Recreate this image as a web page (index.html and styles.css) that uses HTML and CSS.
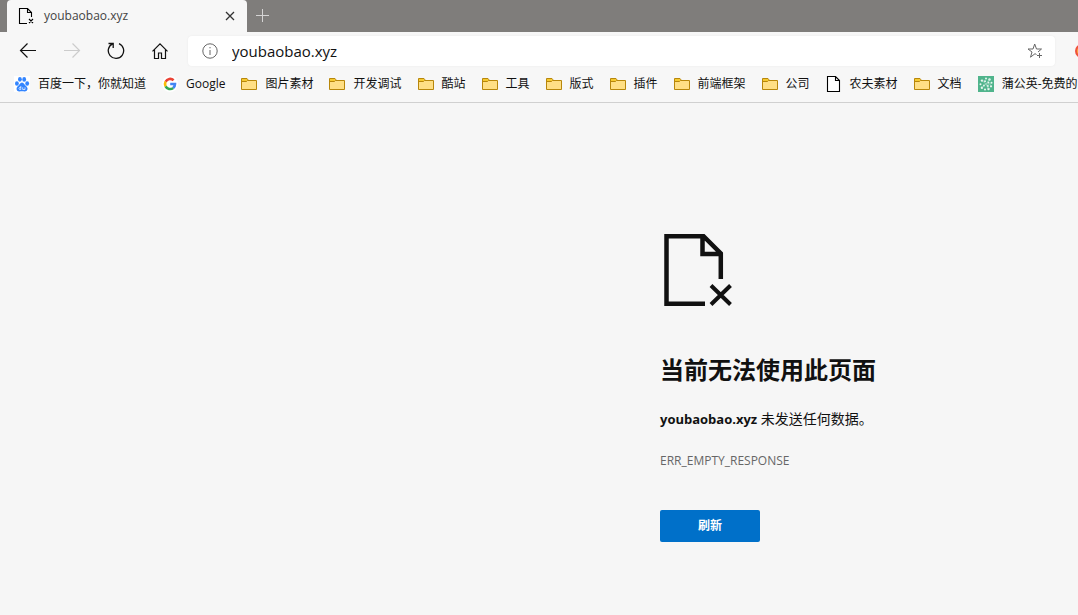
FILE: index.html
```html
<!DOCTYPE html>
<html lang="zh-CN">
<head>
<meta charset="utf-8">
<meta name="viewport" content="width=device-width, initial-scale=1">
<title>youbaobao.xyz</title>
<link rel="stylesheet" href="styles.css">
</head>
<body>
<svg class="sprite" aria-hidden="true">
  <symbol id="folder" viewBox="0 0 16 16">
    <path d="M.5 13.500V2.500H6L7.500 4.500H15.500V13.500Z" fill="#ffdf85" stroke="#b8870b"/>
    <path d="M1 3H5.600L6.600 4.500L5.500 5.500H1Z" fill="#f5c92f"/>
    <path d="M.5 5.500H5.500L6.500 4.500H8" fill="none" stroke="#b8870b"/>
  </symbol>
</svg>
<header class="browser">
  <div class="tabs">
    <div class="tab">
      <svg class="tab-icon" viewBox="0 0 16 16" fill="none" stroke="#000" stroke-width="1.100"><path d="M9 15.500H1.500V.5H9.500L13.500 4.500V9M9.500 .5V4.500H13.500M11 11L15 15M15 11L11 15"/></svg>
      <span class="tab-title">youbaobao.xyz</span>
      <button class="tab-close" type="button" aria-label="关闭标签页"><svg viewBox="0 0 10 10" fill="none" stroke="#333" stroke-width="1.300"><path d="M1 1L9 9M9 1L1 9"/></svg></button>
    </div>
    <button class="tab-new" type="button" aria-label="新建标签页"><svg viewBox="0 0 14 14" fill="none" stroke="#d5d4d4"><path d="M6.500 0V13M0 6.500H13"/></svg></button>
  </div>
  <div class="toolbar">
    <button class="tool" type="button" aria-label="后退"><svg viewBox="0 0 18 18" fill="none" stroke="#111" stroke-width="1.200"><path d="M17 8.500H1.500M8.500 1.500L1.500 8.500L8.500 15.500"/></svg></button>
    <button class="tool" type="button" aria-label="前进" disabled><svg viewBox="0 0 18 18" fill="none" stroke="#ccc" stroke-width="1.200"><path d="M1 8.500H16.500M9.500 1.500L16.500 8.500L9.500 15.500"/></svg></button>
    <button class="tool" type="button" aria-label="刷新"><svg viewBox="0 0 18 18" fill="none" stroke="#111" stroke-width="1.300"><path d="M12 1.600A7.700 7.700 0 1 1 5.500 1.800M1.500 1.500H6.200V6"/></svg></button>
    <button class="tool" type="button" aria-label="主页"><svg viewBox="0 0 18 18" fill="none" stroke="#111" stroke-width="1.200"><path d="M1.500 9.300L9 1.800L16.500 9.300M3.500 7.500V16.500H7.500V11H10.500V16.500H14.500V7.500"/></svg></button>
    <div class="address">
      <svg class="info" viewBox="0 0 16 16" fill="none" stroke="#666"><circle cx="8" cy="8" r="7.200"/><path d="M8 7V12M8 4V5.300"/></svg>
      <input class="url" type="text" value="youbaobao.xyz" aria-label="地址">
      <button class="star" type="button" aria-label="收藏"><svg viewBox="0 0 16 16" fill="none" stroke="#666"><path d="M9.500 11.500L8 10.700L3.500 14.200L5 9L1 6H6L7.700 1L9.500 6H14.500L11 9M12.500 10V15M10 12.500H15"/></svg></button>
    </div>
    <span class="profile"></span>
  </div>
  <nav class="bookmarks" aria-label="收藏夹">
    <a class="bookmark" href="#"><svg viewBox="0 0 16 16"><rect width="16" height="16" fill="#fff"/><g fill="#3385ff"><ellipse cx="2.900" cy="7.500" rx="1.900" ry="2.300"/><ellipse cx="5.900" cy="3.300" rx="1.900" ry="2.400"/><ellipse cx="10.200" cy="3.400" rx="1.900" ry="2.400"/><ellipse cx="13.200" cy="7.500" rx="1.900" ry="2.300"/><path d="M8 6.500C10 6.500 10.400 9 12.500 10.500C14.800 13 12.900 15.700 10.500 15.400C8.500 15.100 7.500 15.100 5.500 15.400C3 15.700 1.500 13 3.500 10.600C5.600 9 6 6.500 8 6.500Z"/></g><path d="M6.800 10V13.500H5.500Q4.500 12.500 5.500 11.500H6.800M8.700 11.300V13.500H11V11.300" fill="none" stroke="#fff" stroke-width=".7"/></svg>百度一下，你就知道</a>
    <a class="bookmark" href="#"><svg viewBox="0 0 16 16" fill="none" stroke-width="2.600"><circle cx="8" cy="8" r="8" fill="#fff"/><path d="M11.600 4.300A5 5 0 0 0 3.600 5.700" stroke="#ea4335"/><path d="M3.600 5.700A5 5 0 0 0 3.600 10.300" stroke="#fbbc05"/><path d="M3.600 10.300A5 5 0 0 0 11.200 11.900" stroke="#34a853"/><path d="M11.200 11.900A5 5 0 0 0 13 8H8.200" stroke="#4285f4"/></svg>Google</a>
    <a class="bookmark" href="#"><svg><use href="#folder"/></svg>图片素材</a>
    <a class="bookmark" href="#"><svg><use href="#folder"/></svg>开发调试</a>
    <a class="bookmark" href="#"><svg><use href="#folder"/></svg>酷站</a>
    <a class="bookmark" href="#"><svg><use href="#folder"/></svg>工具</a>
    <a class="bookmark" href="#"><svg><use href="#folder"/></svg>版式</a>
    <a class="bookmark" href="#"><svg><use href="#folder"/></svg>插件</a>
    <a class="bookmark" href="#"><svg><use href="#folder"/></svg>前端框架</a>
    <a class="bookmark" href="#"><svg><use href="#folder"/></svg>公司</a>
    <a class="bookmark" href="#"><svg viewBox="0 0 16 16" fill="#fff" stroke="#000" stroke-width="1.100"><path d="M1.500 .5H9.500L13.500 4.500V15.500H1.500ZM9.500 .5V4.500H13.500"/></svg>农夫素材</a>
    <a class="bookmark" href="#"><svg><use href="#folder"/></svg>文档</a>
    <a class="bookmark" href="#"><svg viewBox="0 0 16 16"><rect width="16" height="16" fill="#50b48c"/><g fill="#e9f7f1"><circle cx="8" cy="2.500" r="1"/><circle cx="11.500" cy="3.500" r="1.200"/><circle cx="13.500" cy="6.700" r="1"/><circle cx="13" cy="10.300" r="1.100"/><circle cx="10.500" cy="13" r="1.200"/><circle cx="7" cy="13.500" r="1"/><circle cx="3.900" cy="11.700" r="1.200"/><circle cx="2.500" cy="8.300" r="1"/><circle cx="4" cy="4.600" r="1.200"/><circle cx="7" cy="5.300" r="1"/><circle cx="10.400" cy="6.500" r="1"/><circle cx="9.800" cy="10" r="1"/><circle cx="6" cy="9.500" r="1"/></g><path d="M8 8L11.500 3.500M8 8L4 4.600M8 8L4 11.700M8 8L10.500 13M8 8H13" stroke="#b9e0d0" stroke-width=".6"/></svg>蒲公英-免费的</a>
  </nav>
</header>
<main class="error">
  <svg class="error-icon" viewBox="0 0 72 72" fill="none" stroke="#111" stroke-width="4.500"><path d="M45 69.800H6.500V2.200H43.500L60.800 19.500V45M42.500 2V20H61"/><path d="M51 51.500L70.500 70.500M70.500 51.500L51 70.500" stroke-width="4"/></svg>
  <h1 class="error-title">当前无法使用此页面</h1>
  <p class="error-text"><strong class="host">youbaobao.xyz</strong> 未发送任何数据。</p>
  <p class="error-code">ERR_EMPTY_RESPONSE</p>
  <button class="refresh" type="button">刷新</button>
</main>
</body>
</html>
```
FILE: styles.css
```css
* {
  box-sizing: border-box;
}

body {
  margin: 0;
  min-height: 100vh;
  overflow-x: hidden;
  background: #f6f6f6;
  color: #111;
  font: 12px/16px "Open Sans", "Noto Sans CJK SC", sans-serif;
}

button {
  display: flex;
  align-items: center;
  justify-content: center;
  padding: 0;
  border: 0;
  background: none;
  font: inherit;
}

svg {
  display: block;
  flex: none;
}

.sprite {
  position: absolute;
  width: 0;
  height: 0;
}

.browser {
  border-bottom: 1px solid #d0d0d0;
  background: #f7f7f7;
}

.tabs {
  display: flex;
  height: 32px;
  padding-left: 7px;
  background: #7f7d7b;
}

.tab {
  display: flex;
  align-items: center;
  gap: 10px;
  width: 240px;
  padding: 0 10px 0 11px;
  border-radius: 4px 4px 0 0;
  background: #f7f7f7;
}

.tab-icon {
  width: 16px;
  height: 16px;
}

.tab-title {
  flex: 1;
  color: #444;
}

.tab-close {
  width: 14px;
  height: 16px;
}

.tab-close svg {
  width: 10px;
  height: 10px;
}

.tab-new {
  width: 32px;
}

.tab-new svg {
  width: 14px;
  height: 14px;
}

.toolbar {
  display: flex;
  align-items: center;
  height: 38px;
  padding-left: 6px;
  overflow: hidden;
}

.tool {
  flex: none;
  width: 44px;
  height: 32px;
}

.tool svg {
  width: 18px;
  height: 18px;
}

.address {
  display: flex;
  flex: 1;
  align-items: center;
  height: 30px;
  margin: 0 20px 0 6px;
  padding: 0 12px 0 14px;
  border-radius: 4px;
  background: #fff;
  box-shadow: 0 0 2px #e8e8e8;
}

.info {
  width: 16px;
  height: 16px;
}

.url {
  flex: 1;
  min-width: 0;
  height: 28px;
  padding: 0 0 0 14px;
  border: 0;
  outline: 0;
  background: none;
  color: #111;
  font: 15px "Open Sans", sans-serif;
}

.star svg {
  width: 16px;
  height: 16px;
}

.profile {
  flex: none;
  width: 14px;
  height: 14px;
  margin-right: -11px;
  border: 2px solid #f0503c;
  border-radius: 50%;
  background: #fbb03b;
}

.bookmarks {
  display: flex;
  gap: 16px;
  height: 32px;
  padding: 6px 0 0 14px;
  overflow: hidden;
}

.bookmark {
  display: flex;
  flex: none;
  gap: 8px;
  height: 16px;
  color: #111;
  text-decoration: none;
  white-space: nowrap;
}

.bookmark svg {
  width: 16px;
  height: 16px;
}

.error {
  padding: 131px 16px 64px calc(50% + 121px);
}

.error-icon {
  width: 72px;
  height: 72px;
}

.error-title {
  margin: 48px 0 0;
  font-size: 24px;
  line-height: 32px;
}

.error-text {
  margin: 23px 0 0;
  font-size: 14px;
  line-height: 20px;
}

.host {
  font-size: 13px;
}

.error-code {
  margin: 24px 0 0;
  color: #666;
  font-weight: 500;
}

.refresh {
  width: 100px;
  height: 32px;
  margin-top: 41px;
  border-radius: 2px;
  background: #0070c9;
  color: #fff;
  font-weight: 700;
}
```
